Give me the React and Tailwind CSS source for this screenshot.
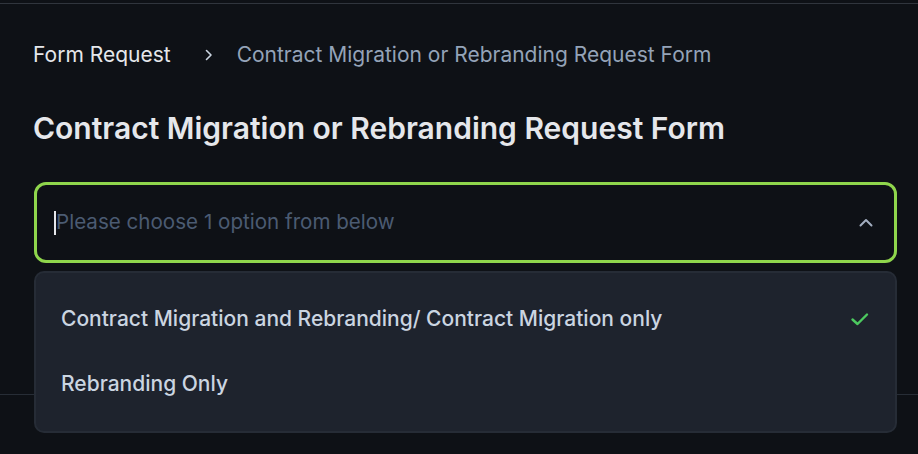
import React from "react";

export default function App() {
  return (
    <div
      className="relative w-[918px] h-[454px] overflow-hidden bg-[#0e1116]"
      style={{ fontFamily: "Inter, 'Noto Sans', sans-serif" }}
    >
      <div className="h-[3px]" />
      <div className="h-px bg-[#30353d]" />
      <div className="px-[33px] pt-[37px]">
        <nav className="flex items-center h-[28px] text-[21px] leading-[28px]">
          <span className="text-[#e5e7eb]">Form Request</span>
          <svg className="ml-[31px] mr-[21px] w-[14px] h-[14px]" viewBox="0 0 14 14" fill="none">
            <path d="M4.5 2.5 L9 7 L4.5 11.5" stroke="#cbd5e1" strokeWidth="1.6" strokeLinecap="round" strokeLinejoin="round" />
          </svg>
          <span className="text-[#94a3b8]">Contract Migration or Rebranding Request Form</span>
        </nav>
        <h1 className="mt-[41px] text-[30px] leading-[36px] font-semibold text-[#e5e7eb]">
          Contract Migration or Rebranding Request Form
        </h1>
        <div className="mt-[36px] mr-[-12px] ml-px h-[81px] rounded-[12px] border-[3px] border-[#8fd64c] flex items-center pl-[17px] pr-[19px]">
          <span className="w-[2px] h-[24px] bg-[#e5e7eb]" />
          <span className="text-[20.6px] text-[#4b5b72] flex-1">Please choose 1 option from below</span>
          <svg className="w-[18px] h-[18px]" viewBox="0 0 18 18" fill="none">
            <path d="M3.5 11.5 L9 6 L14.5 11.5" stroke="#a3aec0" strokeWidth="2" strokeLinecap="round" strokeLinejoin="round" />
          </svg>
        </div>
      </div>
      <div className="absolute left-0 right-0 top-[394px] h-px bg-[#272d36]" />
      <div className="absolute left-[34px] top-[271px] w-[863px] h-[162px] rounded-[10px] border-2 border-[#262c36] bg-[#1e232d] pt-[24px]">
        <div className="flex items-center h-[44px] pl-[25px] pr-[24px]">
          <span className="flex-1 text-[21px] font-medium text-[#cbd5e1]">
            Contract Migration and Rebranding/ Contract Migration only
          </span>
          <svg className="w-[22px] h-[22px]" viewBox="0 0 22 22" fill="none">
            <path d="M3.5 11.5 L8.5 16 L18 6.5" stroke="#4cc95f" strokeWidth="2.4" strokeLinecap="round" strokeLinejoin="round" />
          </svg>
        </div>
        <div className="flex items-center h-[44px] mt-[21px] pl-[25px]">
          <span className="text-[21px] font-medium text-[#cbd5e1]">Rebranding Only</span>
        </div>
      </div>
    </div>
  );
}
